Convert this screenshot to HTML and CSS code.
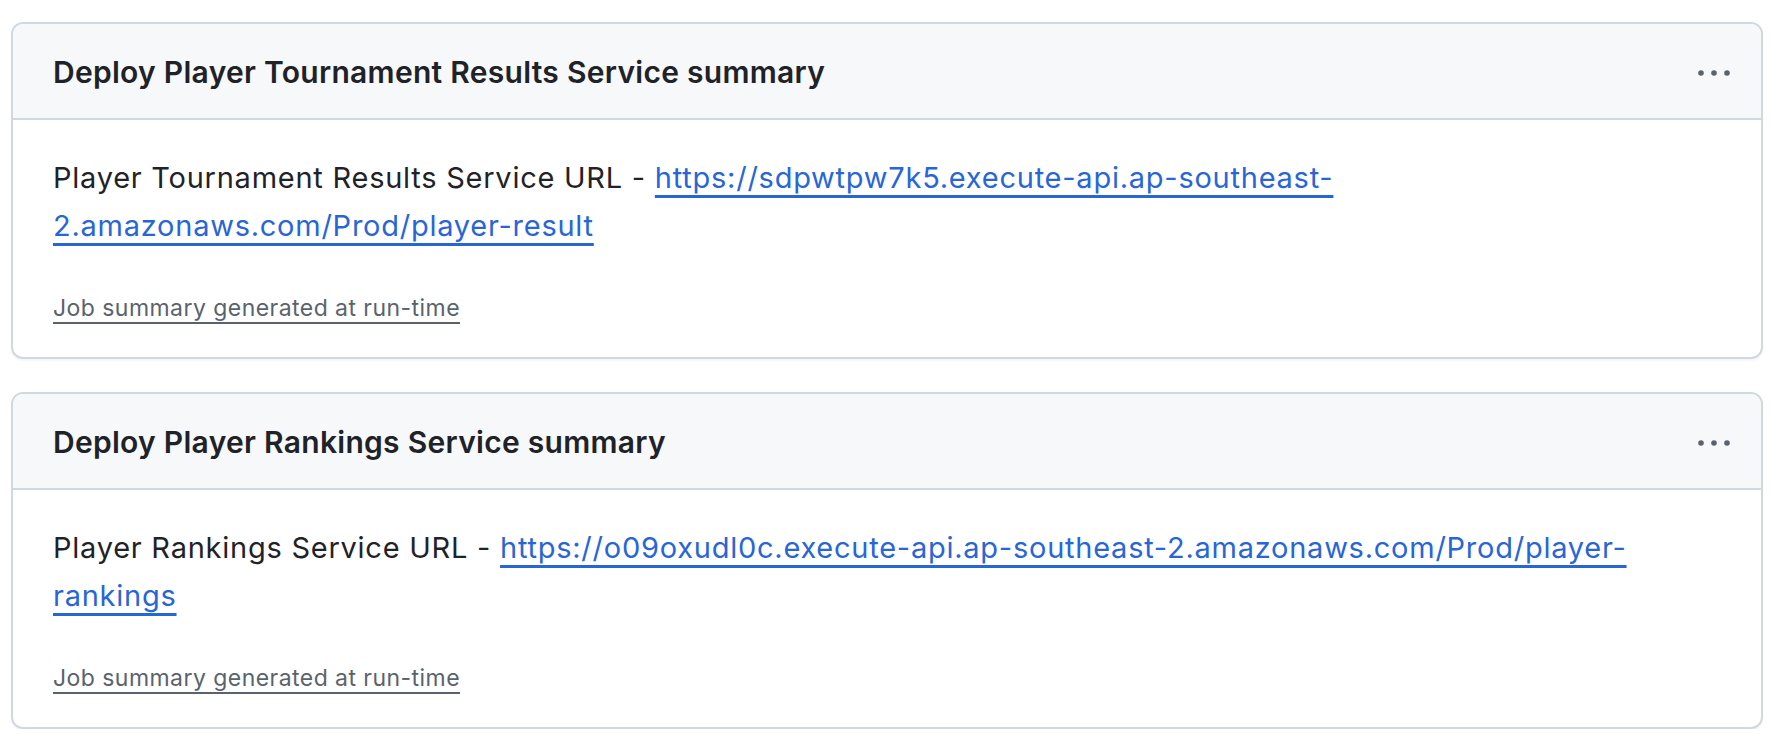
FILE: index.html
```html
<!DOCTYPE html>
<html lang="en">
<head>
<meta charset="utf-8">
<title>Job summaries</title>
<link rel="stylesheet" href="styles.css">
</head>
<body>
<main class="summaries">
  <section class="card">
    <header class="card-header">
      <h3 class="card-title">Deploy Player Tournament Results Service summary</h3>
      <button class="more" aria-label="More options">
        <svg width="32" height="8" viewBox="0 0 32 8"><circle cx="3" cy="4" r="2.8"/><circle cx="16" cy="4" r="2.8"/><circle cx="29" cy="4" r="2.8"/></svg>
      </button>
    </header>
    <div class="card-body">
      <p class="summary-text">Player Tournament Results Service URL - <a href="#">https://sdpwtpw7k5.execute-api.ap-southeast-2.amazonaws.com/Prod/player-result</a></p>
      <a class="footnote" href="#">Job summary generated at run-time</a>
    </div>
  </section>
  <section class="card">
    <header class="card-header">
      <h3 class="card-title">Deploy Player Rankings Service summary</h3>
      <button class="more" aria-label="More options">
        <svg width="32" height="8" viewBox="0 0 32 8"><circle cx="3" cy="4" r="2.8"/><circle cx="16" cy="4" r="2.8"/><circle cx="29" cy="4" r="2.8"/></svg>
      </button>
    </header>
    <div class="card-body">
      <p class="summary-text">Player Rankings Service URL - <a href="#">https://o09oxudl0c.execute-api.ap-southeast-2.amazonaws.com/Prod/player-rankings</a></p>
      <a class="footnote" href="#">Job summary generated at run-time</a>
    </div>
  </section>
</main>
</body>
</html>
```
FILE: styles.css
```css
html, body {
  margin: 0;
  padding: 0;
  background: #ffffff;
}
body {
  font-family: Inter, "Noto Sans", "Liberation Sans", sans-serif;
  color: #1f2328;
}
.summaries {
  display: flex;
  flex-direction: column;
  gap: 33px;
  padding: 22px 23px 0 11px;
}
.card {
  border: 2px solid #d1d9e0;
  border-radius: 12px;
  background: #ffffff;
  box-shadow: 0 2px 2px rgba(31, 35, 40, 0.04);
  overflow: hidden;
}
.card-header {
  display: flex;
  align-items: center;
  justify-content: space-between;
  background: #f6f8fa;
  border-bottom: 2px solid #d1d9e0;
  padding: 3px 31px 0 40px;
  box-sizing: border-box;
  height: 96px;
}
.card-title {
  margin: 0;
  font-size: 30px;
  font-weight: 580;
  letter-spacing: 0.28px;
  line-height: 45px;
}
.more {
  display: flex;
  align-items: center;
  border: 0;
  background: transparent;
  padding: 0;
  margin: 0;
  color: #59636e;
  fill: currentColor;
  cursor: pointer;
}
.card-body {
  padding: 34px 40px 31px 40px;
}
.summary-text {
  margin: 0;
  font-size: 29px;
  letter-spacing: 0.75px;
  line-height: 48px;
}
.summary-text a {
  color: #2966d5;
  text-decoration: underline;
  text-decoration-thickness: 2.5px;
  text-underline-offset: 7px;
}
.footnote {
  display: inline-block;
  margin-top: 40px;
  font-size: 23px;
  letter-spacing: 0.45px;
  line-height: 36px;
  color: #59636e;
  text-decoration: underline;
  text-decoration-thickness: 2px;
  text-underline-offset: 6px;
}
```
